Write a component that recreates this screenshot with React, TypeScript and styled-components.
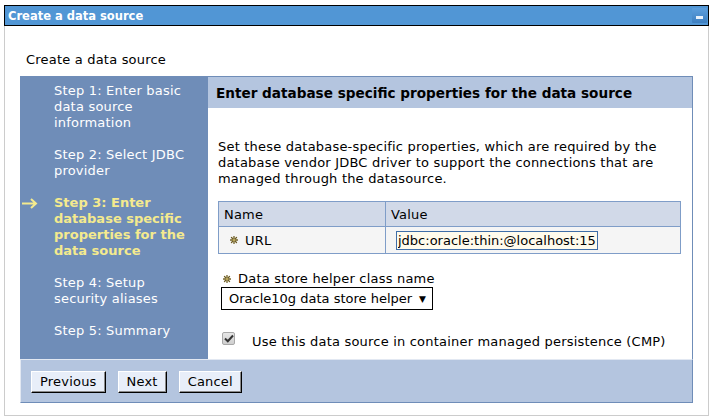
import React from "react";
import styled, { createGlobalStyle } from "styled-components";

const Global = createGlobalStyle`
  html, body { margin: 0; padding: 0; background: #ffffff; }
  body { font-family: "DejaVu Sans", Verdana, sans-serif; font-size: 13px; color: #000; letter-spacing: 0.2px; }
`;

const Page = styled.div`
  margin: 5px 0 0 4px;
  width: 705px;
`;

const TitleBar = styled.div`
  height: 19px;
  background: #5196d5;
  border: 1px solid #000;
  display: flex;
  align-items: center;
  justify-content: space-between;
  padding: 0 1px 0 3px;
`;

const TitleText = styled.span`
  color: #fff;
  font-weight: bold;
  font-size: 11.5px;
  letter-spacing: 0;
`;

const MinButton = styled.span`
  width: 15px;
  height: 15px;
  background: linear-gradient(#5d9fdd, #3e7fc0);
  border-radius: 1px;
  display: flex;
  align-items: flex-end;
  justify-content: center;
  padding-bottom: 4px;
  box-sizing: border-box;
  &::after {
    content: "";
    width: 7px;
    height: 3px;
    background: #e8f1fb;
  }
`;

const Frame = styled.div`
  border: 1px solid #cccccc;
  border-top: none;
  height: 390px;
  box-sizing: border-box;
  padding: 0 15px;
`;

const PageHeading = styled.div`
  padding: 26px 0 0 6px;
  line-height: 16px;
  height: 24px;
`;

const Wizard = styled.div`
  display: grid;
  grid-template-columns: 188px 1fr;
  grid-template-rows: 282px 44px;
  width: 673px;
  border-top: 1px solid #6f8db8;
`;

const Nav = styled.div`
  background: #6f8db8;
  padding: 6px 12px 0 0;
  display: flex;
  flex-direction: column;
  gap: 16px;
`;

const NavItem = styled.div<{ $current?: boolean }>`
  display: grid;
  grid-template-columns: 34px 1fr;
  color: ${(p) => (p.$current ? "#f4ea8e" : "#ffffff")};
  font-weight: ${(p) => (p.$current ? "bold" : "normal")};
  letter-spacing: ${(p) => (p.$current ? "0" : "0.2px")};
  line-height: 16px;
`;

const ArrowCell = styled.span`
  display: flex;
  justify-content: flex-end;
  padding: 3px 16px 0 0;
  height: 11px;
`;

const Content = styled.div`
  border-right: 1px solid #6f8db8;
  display: flex;
  flex-direction: column;
`;

const Header = styled.div`
  background: #b4c5df;
  height: 31px;
  display: flex;
  align-items: center;
  padding-left: 8px;
  font-weight: bold;
  font-size: 13.6px;
  letter-spacing: 0;
`;

const Body = styled.div`
  padding: 31px 10px 0 10px;
  flex: 1;
`;

const Para = styled.p`
  margin: 0;
  line-height: 16px;
`;

const PropTable = styled.table`
  margin-top: 14px;
  width: 463px;
  border-collapse: collapse;
  border: 1px solid #7f9dc8;
`;

const HeadCell = styled.th<{ $w?: number }>`
  background: #d1d9e8;
  font-weight: normal;
  text-align: left;
  height: 24px;
  padding: 0 5px;
  border: 1px solid #7f9dc8;
  width: ${(p) => (p.$w ? `${p.$w}px` : "auto")};
`;

const Cell = styled.td`
  background: #f5f5f5;
  height: 26px;
  padding: 0 5px;
  border: 1px solid #7f9dc8;
`;

const Req = styled.span`
  display: inline-flex;
  align-items: center;
  gap: 7px;
`;

const ReqCell = styled(Req)`
  padding-left: 6px;
`;

const TextInput = styled.input`
  width: 202px;
  height: 19px;
  box-sizing: border-box;
  margin-left: 5px;
  padding: 0 1px;
  border: 1px solid #3f6ea8;
  background: #fffbec;
  font-family: "DejaVu Sans", Verdana, sans-serif;
  font-size: 13px;
  letter-spacing: 0;
  color: #000;
  outline: none;
  display: block;
`;

const FieldLabel = styled.div`
  margin-top: 17px;
  padding-left: 5px;
  line-height: 16px;
`;

const SelectBox = styled.div`
  margin-left: 3px;
  width: 212px;
  height: 23px;
  box-sizing: border-box;
  border: 1px solid #000;
  display: flex;
  align-items: center;
  justify-content: space-between;
  padding: 0 6px 0 7px;
  background: #fff;
  letter-spacing: 0;
`;

const Caret = styled.span`
  font-size: 9px;
`;

const CheckRow = styled.div`
  margin-top: 24px;
  padding-left: 4px;
  display: flex;
  align-items: flex-start;
  gap: 17px;
  line-height: 16px;
`;

const CheckBox = styled.span`
  width: 13px;
  height: 13px;
  box-sizing: border-box;
  border: 1px solid #a8a8a8;
  border-radius: 2px;
  background: linear-gradient(#e6e6e6, #cfcfcf);
  display: flex;
  align-items: center;
  justify-content: center;
  margin-top: -2px;
`;

const Footer = styled.div`
  grid-column: 1 / 3;
  background: #b4c5df;
  border: 1px solid #6f8db8;
  border-top-color: #e2e8f2;
  border-left-color: #e2e8f2;
  display: flex;
  align-items: center;
  gap: 12px;
  padding: 0 10px;
`;

const Button = styled.button`
  font-family: "DejaVu Sans", Verdana, sans-serif;
  font-size: 13px;
  letter-spacing: 0.2px;
  height: 22px;
  padding: 0 8px;
  background: #e8eef9;
  border: 1px solid;
  border-color: #ffffff #000000 #000000 #ffffff;
  box-shadow: inset -1px -1px 0 #8a8a8a;
  color: #000;
  margin-top: 1px;
`;

const Star = () => (
  <svg width="8" height="8" viewBox="0 0 8 8">
    <g stroke="#6e5d22" strokeWidth="1.3" strokeLinecap="round">
      <line x1="4" y1="0.5" x2="4" y2="7.5" />
      <line x1="0.5" y1="4" x2="7.5" y2="4" />
      <line x1="1.5" y1="1.5" x2="6.5" y2="6.5" />
      <line x1="6.5" y1="1.5" x2="1.5" y2="6.5" />
    </g>
    <circle cx="4" cy="4" r="1.3" fill="#b9a65a" />
  </svg>
);

const Arrow = () => (
  <svg width="17" height="11" viewBox="0 0 17 11">
    <path d="M1 5.5H15M10 1L15 5.5L10 10" fill="none" stroke="#f4ea8e" strokeWidth="2" />
  </svg>
);

const steps = [
  { text: "Step 1: Enter basic data source information" },
  { text: "Step 2: Select JDBC provider" },
  { text: "Step 3: Enter database specific properties for the data source", current: true },
  { text: "Step 4: Setup security aliases" },
  { text: "Step 5: Summary" },
];

export default function App() {
  return (
    <>
      <Global />
      <Page>
        <TitleBar>
          <TitleText>Create a data source</TitleText>
          <MinButton />
        </TitleBar>
        <Frame>
          <PageHeading>Create a data source</PageHeading>
          <Wizard>
            <Nav>
              {steps.map((s) => (
                <NavItem key={s.text} $current={s.current}>
                  <ArrowCell>{s.current ? <Arrow /> : null}</ArrowCell>
                  <span>{s.text}</span>
                </NavItem>
              ))}
            </Nav>
            <Content>
              <Header>Enter database specific properties for the data source</Header>
              <Body>
                <Para>
                  Set these database-specific properties, which are required by the database vendor JDBC driver
                  to support the connections that are managed through the datasource.
                </Para>
                <PropTable>
                  <thead>
                    <tr>
                      <HeadCell $w={156}>Name</HeadCell>
                      <HeadCell>Value</HeadCell>
                    </tr>
                  </thead>
                  <tbody>
                    <tr>
                      <Cell>
                        <ReqCell>
                          <Star />
                          URL
                        </ReqCell>
                      </Cell>
                      <Cell>
                        <TextInput readOnly value="jdbc:oracle:thin:@localhost:1521:sample" />
                      </Cell>
                    </tr>
                  </tbody>
                </PropTable>
                <FieldLabel>
                  <Req>
                    <Star />
                    Data store helper class name
                  </Req>
                </FieldLabel>
                <SelectBox>
                  <span>Oracle10g data store helper</span>
                  <Caret>▼</Caret>
                </SelectBox>
                <CheckRow>
                  <CheckBox>
                    <svg width="10" height="9" viewBox="0 0 10 9">
                      <path d="M1 4.5L3.8 7.2L9 1.5" fill="none" stroke="#333" strokeWidth="2" />
                    </svg>
                  </CheckBox>
                  <span>Use this data source in container managed persistence (CMP)</span>
                </CheckRow>
              </Body>
            </Content>
            <Footer>
              <Button>Previous</Button>
              <Button>Next</Button>
              <Button>Cancel</Button>
            </Footer>
          </Wizard>
        </Frame>
      </Page>
    </>
  );
}
